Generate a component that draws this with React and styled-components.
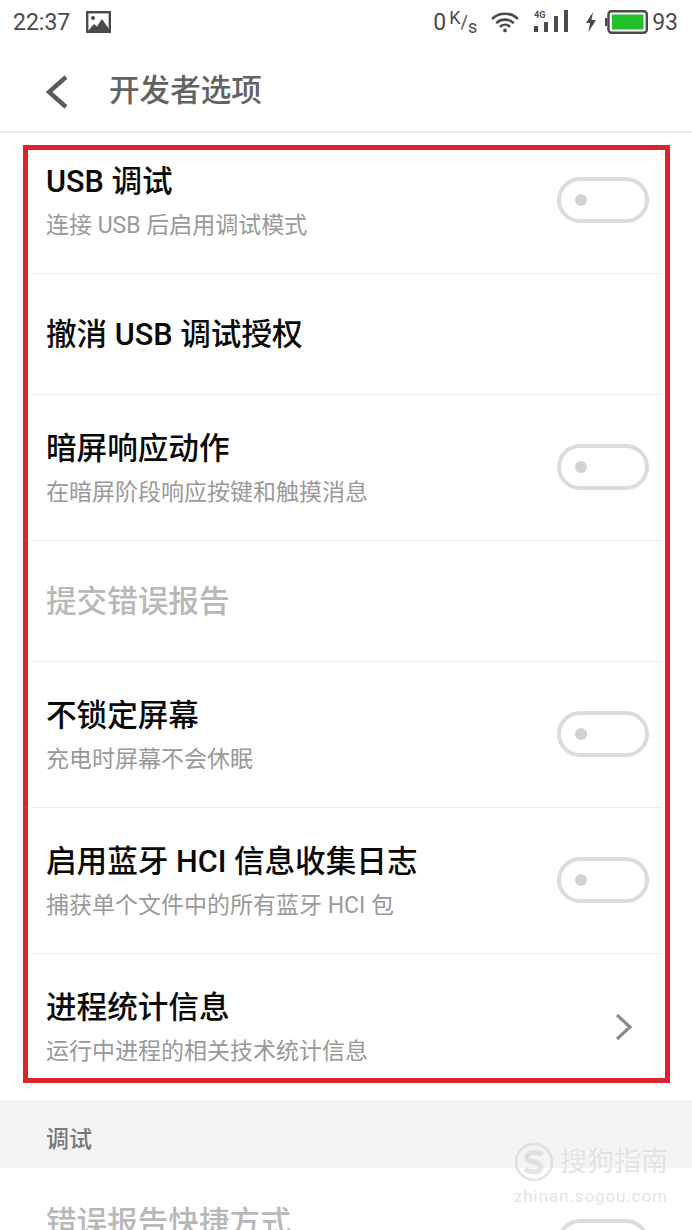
import React from "react";
import styled, { createGlobalStyle } from "styled-components";

const GlobalStyle = createGlobalStyle`
  html, body {
    margin: 0;
    padding: 0;
    background: #fff;
  }
  body {
    font-family: "Roboto", "Noto Sans CJK SC", sans-serif;
  }
`;

const Page = styled.div`
  position: relative;
  width: 692px;
  height: 1230px;
  overflow: hidden;
  background: #fff;
`;

const StatusBar = styled.div`
  height: 44px;
  padding: 0 14px 0 13px;
  display: flex;
  align-items: center;
  justify-content: space-between;
  color: #4a4a4a;
  font-size: 23px;
`;

const StatusGroup = styled.div`
  display: flex;
  align-items: center;
`;

const StatusSlot = styled.span`
  display: inline-flex;
  align-items: center;
  margin-left: ${(p) => p.$ml || 0}px;
`;

const SpeedUnit = styled.span`
  display: inline-flex;
  font-size: 18px;
  margin-left: 3px;
  width: 27px;
`;

const UnitPart = styled.span`
  position: relative;
  top: ${(p) => p.$shift}px;
`;

const Header = styled.header`
  height: 79px;
  display: flex;
  align-items: center;
  padding: 8px 0 0 45px;
  gap: 41px;
  border-bottom: 2px solid #e9e9e9;
  color: #5f5f5f;
`;

const HeaderTitle = styled.h1`
  margin: 0;
  font-size: 30.6px;
  font-weight: 500;
  color: #626262;
  line-height: 1;
`;

const List = styled.div`
  margin-top: -5px;
  display: flex;
  flex-direction: column;
`;

const Row = styled.div`
  height: ${(p) => (p.$tall ? 146 : 121)}px;
  margin: 0 30px;
  padding: 0 13px 0 16px;
  box-sizing: border-box;
  display: flex;
  align-items: center;
  justify-content: space-between;
  border-bottom: ${(p) => (p.$last ? "none" : "1px solid #ececec")};
`;

const RowText = styled.div`
  display: flex;
  flex-direction: column;
  gap: 11px;
  margin-top: ${(p) => (p.$tall ? 5 : 0)}px;
`;

const Title = styled.div`
  font-size: 30.6px;
  line-height: 33px;
  font-weight: 500;
  color: ${(p) => (p.$disabled ? "#b8b8b8" : "#080808")};
  white-space: pre;
`;

const Sub = styled.div`
  font-size: 23px;
  line-height: 33px;
  color: #999;
  white-space: pre;
`;

const Toggle = styled.div`
  width: 92px;
  height: 46px;
  margin-top: -2px;
  box-sizing: border-box;
  border: 4px solid #dcdcdc;
  border-radius: 23px;
  display: flex;
  align-items: center;
  padding-left: 14px;
  background: #fff;
  flex: none;
`;

const ToggleDot = styled.span`
  width: 12px;
  height: 12px;
  border-radius: 50%;
  background: #d2d2d2;
`;

const ChevronSlot = styled.div`
  margin-right: 16px;
  display: flex;
`;

const Section = styled.div`
  height: 68px;
  box-sizing: border-box;
  background: #f4f4f4;
  display: flex;
  align-items: center;
  padding: 5px 0 0 46px;
  font-size: 23px;
  font-weight: 500;
  color: #777;
`;

const BottomRow = styled.div`
  margin: 38px 0 0;
  padding: 0 43px 0 46px;
  display: flex;
  align-items: flex-start;
  justify-content: space-between;
`;

const BottomToggle = styled(Toggle)`
  margin-top: 13px;
`;

// the red marker somebody drew on top of the screenshot
const Highlight = styled.div`
  position: absolute;
  left: 23px;
  top: 145px;
  width: 647px;
  height: 938px;
  box-sizing: border-box;
  border: 5px solid #dc2430;
  pointer-events: none;
`;

const Watermark = styled.div`
  position: absolute;
  left: 514px;
  top: 1142px;
  width: 160px;
  color: rgba(205, 205, 205, 0.55);
  text-shadow: 0 0 2px rgba(255, 255, 255, 0.9);
  pointer-events: none;
`;

const WatermarkTop = styled.div`
  display: flex;
  align-items: center;
  gap: 6px;
  font-size: 27px;
  line-height: 40px;
`;

const WatermarkUrl = styled.div`
  font-size: 17px;
  line-height: 20px;
  margin-top: 4px;
  letter-spacing: 0.9px;
  white-space: pre;
`;

const PictureIcon = () => (
  <svg width="25" height="22" viewBox="0 0 25 22">
    <rect x="1.2" y="1.2" width="22.6" height="19.6" fill="#fff" stroke="#4a4a4a" strokeWidth="2.4" />
    <circle cx="7" cy="7" r="2" fill="#4a4a4a" />
    <path d="M2 20 L8 13 L11 15.5 L16 8 L23 18 V20 Z" fill="#4a4a4a" />
  </svg>
);

const WifiIcon = () => (
  <svg width="28" height="24" viewBox="0 0 30 24" fill="none" stroke="#4a4a4a" strokeWidth="2.8" strokeLinecap="round">
    <path d="M2 8 C9 1.5 21 1.5 28 8" />
    <path d="M6.5 12.5 C11 8.5 19 8.5 23.5 12.5" />
    <path d="M10.5 16.5 C13 14.5 17 14.5 19.5 16.5" />
    <circle cx="15" cy="21" r="2" fill="#4a4a4a" stroke="none" />
  </svg>
);

const SignalIcon = () => (
  <svg width="36" height="26" viewBox="0 0 36 26">
    <text x="0" y="9" fontSize="9" fontWeight="700" fill="#4a4a4a" fontFamily="Roboto, sans-serif">4G</text>
    <rect x="0" y="17" width="4" height="6" fill="#4a4a4a" />
    <rect x="10" y="13" width="4" height="10" fill="#4a4a4a" />
    <rect x="20" y="7" width="4" height="16" fill="#4a4a4a" />
    <rect x="30" y="1" width="4" height="22" fill="#4a4a4a" />
  </svg>
);

const BoltIcon = () => (
  <svg width="12" height="20" viewBox="0 0 12 20">
    <path d="M8 0 L1 11 H5 L3.5 20 L11 8 H6.5 Z" fill="#4a4a4a" />
  </svg>
);

const BatteryIcon = () => (
  <svg width="43" height="24" viewBox="0 0 43 24">
    <rect x="0" y="8" width="2.5" height="8" fill="#4a4a4a" />
    <rect x="3.5" y="1.2" width="38.3" height="21.6" rx="3" fill="#fff" stroke="#4a4a4a" strokeWidth="2.4" />
    <rect x="7" y="4.5" width="31.5" height="15" fill="#22c12a" />
  </svg>
);

const BackIcon = () => (
  <svg width="23" height="34" viewBox="0 0 23 34" fill="none" stroke="#5c5c5c" strokeWidth="4.4">
    <path d="M21 2 L4 17 L21 32" />
  </svg>
);

const ChevronIcon = () => (
  <svg width="18" height="28" viewBox="0 0 18 28" fill="none" stroke="#8c8c8c" strokeWidth="3.2">
    <path d="M2 2 L15 14 L2 26" />
  </svg>
);

const SogouIcon = () => (
  <svg width="40" height="40" viewBox="0 0 40 40" fill="none" stroke="rgba(205,205,205,0.55)">
    <circle cx="20" cy="20" r="18" strokeWidth="2.5" />
    <path d="M28 13 C24 9 12 10 13 16 C14 21 27 19 27 25 C27 31 15 31 11 27" strokeWidth="5" />
  </svg>
);

const rows = [
  { title: "USB 调试", sub: "连接 USB 后启用调试模式", right: "toggle" },
  { title: "撤消 USB 调试授权" },
  { title: "暗屏响应动作", sub: "在暗屏阶段响应按键和触摸消息", right: "toggle" },
  { title: "提交错误报告", disabled: true },
  { title: "不锁定屏幕", sub: "充电时屏幕不会休眠", right: "toggle" },
  { title: "启用蓝牙 HCI 信息收集日志", sub: "捕获单个文件中的所有蓝牙 HCI 包", right: "toggle" },
  { title: "进程统计信息", sub: "运行中进程的相关技术统计信息", right: "chevron" },
];

export default function App() {
  return (
    <Page>
      <GlobalStyle />
      <StatusBar>
        <StatusGroup>
          <span>22:37</span>
          <StatusSlot $ml={16}>
            <PictureIcon />
          </StatusSlot>
        </StatusGroup>
        <StatusGroup>
          <span>0</span>
          <SpeedUnit>
            <UnitPart $shift={-5}>K</UnitPart>
            <UnitPart $shift={-1}>/</UnitPart>
            <UnitPart $shift={4}>s</UnitPart>
          </SpeedUnit>
          <StatusSlot $ml={15}>
            <WifiIcon />
          </StatusSlot>
          <StatusSlot $ml={15}>
            <SignalIcon />
          </StatusSlot>
          <StatusSlot $ml={15}>
            <BoltIcon />
          </StatusSlot>
          <StatusSlot $ml={8}>
            <BatteryIcon />
          </StatusSlot>
          <StatusSlot $ml={4}>93</StatusSlot>
        </StatusGroup>
      </StatusBar>
      <Header>
        <BackIcon />
        <HeaderTitle>开发者选项</HeaderTitle>
      </Header>
      <List>
        {rows.map((r, i) => (
          <Row key={r.title} $tall={!!r.sub} $last={i === rows.length - 1}>
            <RowText $tall={!!r.sub}>
              <Title $disabled={r.disabled}>{r.title}</Title>
              {r.sub && <Sub>{r.sub}</Sub>}
            </RowText>
            {r.right === "toggle" && (
              <Toggle>
                <ToggleDot />
              </Toggle>
            )}
            {r.right === "chevron" && (
              <ChevronSlot>
                <ChevronIcon />
              </ChevronSlot>
            )}
          </Row>
        ))}
      </List>
      <Section>调试</Section>
      <BottomRow>
        <Title $disabled>错误报告快捷方式</Title>
        <BottomToggle>
          <ToggleDot />
        </BottomToggle>
      </BottomRow>
      <Highlight />
      <Watermark>
        <WatermarkTop>
          <SogouIcon />
          <span>搜狗指南</span>
        </WatermarkTop>
        <WatermarkUrl>zhinan.sogou.com</WatermarkUrl>
      </Watermark>
    </Page>
  );
}
